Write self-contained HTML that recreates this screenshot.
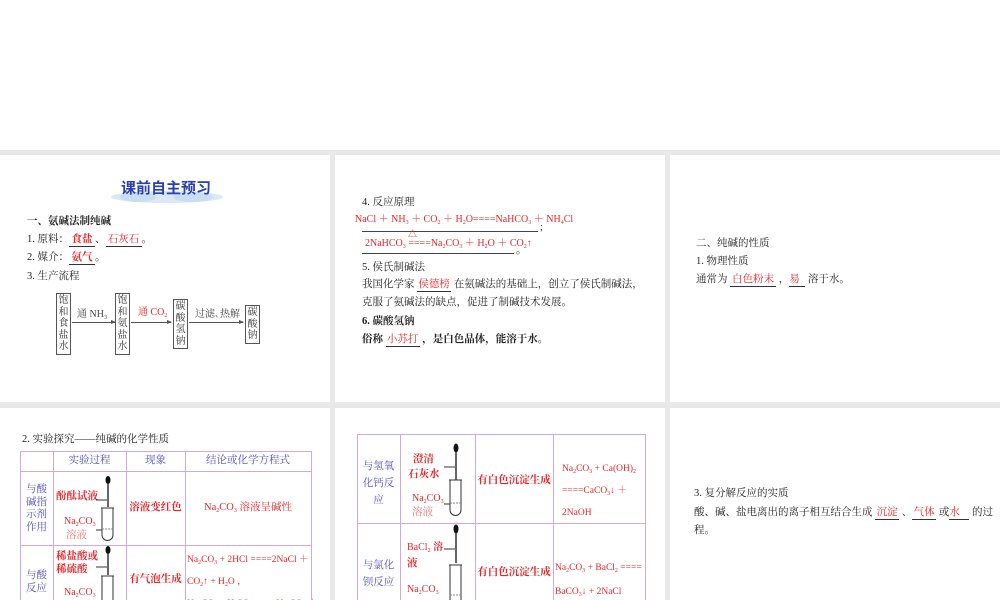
<!DOCTYPE html>
<html><head><meta charset="utf-8"><style>
*{margin:0;padding:0}
html,body{width:1000px;height:600px;overflow:hidden}
body{position:relative;background:#fff;font-family:"Liberation Serif","Noto Serif CJK SC","Noto Sans CJK SC",serif;font-size:10.5px;color:#222}
.g{position:absolute;background:#e8e8e8}
.t{position:absolute;white-space:nowrap;line-height:12px}
.b{font-weight:bold}
.r{color:#e3262a}
.u{border-bottom:1px solid #333;display:inline-block;text-align:center}
sub{font-size:6px;vertical-align:-2px}
.box{position:absolute;border:1px solid #555;width:13px;font-size:10px;line-height:11.5px;text-align:center;color:#333;padding:1px 0}
.ar{position:absolute;height:1px;background:#555}
.ar:after{content:"";position:absolute;right:-1px;top:-2px;border-left:5px solid #555;border-top:2.5px solid transparent;border-bottom:2.5px solid transparent}
.h{position:absolute;height:1px;background:#cfa8e8}
.v{position:absolute;width:1px;background:#cfa8e8}
.bl{color:#5050c0}
.c{position:absolute;text-align:center;line-height:12px}
</style></head><body>
<div class="g" style="left:0;top:150px;width:1000px;height:5px"></div>
<div class="g" style="left:0;top:402px;width:1000px;height:6px"></div>
<div class="g" style="left:330px;top:155px;width:5px;height:445px"></div>
<div class="g" style="left:665px;top:155px;width:5px;height:445px"></div>

<!-- panel 1 -->
<svg style="position:absolute;left:108px;top:180px" width="118" height="26"><ellipse cx="59" cy="17" rx="56" ry="6" fill="#dbe9f6"/><ellipse cx="30" cy="17" rx="18" ry="5" fill="#c9def2"/><ellipse cx="85" cy="17" rx="20" ry="5" fill="#c9def2"/></svg>
<div class="t b" style="left:121px;top:179px;font-size:15px;line-height:18px;color:#2a3fb0;font-family:'Noto Sans CJK SC',sans-serif">课前自主预习</div>
<div class="t b" style="left:27px;top:216px">一、氨碱法制纯碱</div>
<div class="t" style="left:27px;top:234px">1. 原料：<span class="u r b" style="width:26px">食盐</span>、<span class="u r" style="width:36px">石灰石</span>。</div>
<div class="t" style="left:27px;top:252px">2. 媒介：<span class="u r b" style="width:26px">氨气</span>。</div>
<div class="t" style="left:27px;top:271px">3. 生产流程</div>
<div class="box" style="left:56px;top:293px">饱和食盐水</div>
<div class="ar" style="left:72px;top:322px;width:43px"></div>
<div class="t" style="left:77px;top:309px;color:#444;font-size:10px">通 NH<sub>3</sub></div>
<div class="box" style="left:115px;top:293px">饱和氨盐水</div>
<div class="ar" style="left:131px;top:322px;width:40px"></div>
<div class="t r" style="left:138px;top:307px;border-bottom:1px solid #555;font-size:10px">通 CO<sub>2</sub></div>
<div class="box" style="left:173px;top:299px">碳酸氢钠</div>
<div class="ar" style="left:189px;top:322px;width:54px"></div>
<div class="t" style="left:195px;top:309px;color:#444;font-size:10px">过滤､热解</div>
<div class="box" style="left:245px;top:305px">碳酸钠</div>

<!-- panel 2 -->
<div class="t" style="left:362px;top:197px">4. 反应原理</div>
<div class="t r" style="left:355px;top:214px;font-size:10px">NaCl ＋ NH<sub>3</sub> ＋ CO<sub>2</sub> ＋ H<sub>2</sub>O====NaHCO<sub>3</sub> ＋ NH<sub>4</sub>Cl</div>
<div style="position:absolute;left:362px;top:231px;width:176px;height:1px;background:#444"></div>
<div class="t" style="left:540px;top:222px">;</div>
<div class="t r" style="left:408px;top:228px;font-size:9px">△</div>
<div class="t r" style="left:365px;top:238px;font-size:10px">2NaHCO<sub>3</sub> ====Na<sub>2</sub>CO<sub>3</sub> ＋ H<sub>2</sub>O ＋ CO<sub>2</sub>↑</div>
<div style="position:absolute;left:362px;top:253px;width:152px;height:1px;background:#444"></div>
<div class="t" style="left:516px;top:245px">。</div>
<div class="t" style="left:362px;top:262px">5. 侯氏制碱法</div>
<div class="t" style="left:362px;top:279px">我国化学家 <span class="u r" style="width:34px">侯德榜</span> 在氨碱法的基础上，创立了侯氏制碱法，</div>
<div class="t" style="left:362px;top:297px">克服了氨碱法的缺点，促进了制碱技术发展。</div>
<div class="t b" style="left:362px;top:316px">6. 碳酸氢钠</div>
<div class="t b" style="left:362px;top:334px">俗称 <span class="u r" style="width:34px;font-weight:normal">小苏打</span> ，是白色晶体，能溶于水。</div>

<!-- panel 3 -->
<div class="t" style="left:696px;top:238px">二、纯碱的性质</div>
<div class="t" style="left:696px;top:256px">1. 物理性质</div>
<div class="t" style="left:696px;top:274px">通常为 <span class="u r" style="width:46px">白色粉末</span> ，<span class="u r" style="width:16px;text-align:left">易</span> 溶于水。</div>

<!-- row2 panel1 table -->
<div class="t" style="left:22px;top:434px">2. 实验探究——纯碱的化学性质</div>
<div class="h" style="left:20px;top:451px;width:292px"></div>
<div class="h" style="left:20px;top:471px;width:292px"></div>
<div class="h" style="left:20px;top:545px;width:292px"></div>
<div class="v" style="left:20px;top:451px;height:149px"></div>
<div class="v" style="left:53px;top:451px;height:149px"></div>
<div class="v" style="left:126px;top:451px;height:149px"></div>
<div class="v" style="left:185px;top:451px;height:149px"></div>
<div class="v" style="left:311px;top:451px;height:149px"></div>
<div class="c bl" style="left:53px;top:455px;width:73px">实验过程</div>
<div class="c bl" style="left:126px;top:455px;width:59px">现象</div>
<div class="c bl" style="left:185px;top:455px;width:126px">结论或化学方程式</div>
<div class="c bl" style="left:20px;top:484px;width:33px;line-height:12.5px">与酸<br>碱指<br>示剂<br>作用</div>
<div class="t r b" style="left:56px;top:491px">酚酞试液</div>
<div class="t r" style="left:64px;top:516px;font-size:10px">Na<sub>2</sub>CO<sub>3</sub></div>
<div class="t" style="left:66px;top:530px;color:#e77">溶液</div>
<svg style="position:absolute;left:96px;top:475px" width="30" height="70"><ellipse cx="12" cy="5" rx="2.5" ry="4" fill="#111"/><line x1="12" y1="9" x2="12" y2="32" stroke="#333" stroke-width="1.5"/><line x1="0" y1="25" x2="11" y2="25" stroke="#333"/><path d="M6 33 V60 a5 5 0 0 0 11 0 V33" fill="none" stroke="#333"/><line x1="5" y1="33" x2="18" y2="33" stroke="#333"/><line x1="-2" y1="55" x2="6" y2="55" stroke="#333"/><line x1="6" y1="54" x2="17" y2="54" stroke="#888" stroke-dasharray="2 1"/></svg>
<div class="c r b" style="left:126px;top:502px;width:59px">溶液变红色</div>
<div class="c r" style="left:185px;top:502px;width:126px">Na<sub>2</sub>CO<sub>3</sub> 溶液呈碱性</div>
<div class="c bl" style="left:20px;top:569px;width:33px;line-height:13px">与酸<br>反应</div>
<div class="t r b" style="left:56px;top:551px">稀盐酸或</div>
<div class="t r b" style="left:56px;top:564px">稀硫酸</div>
<div class="t r" style="left:64px;top:587px;font-size:10px">Na<sub>2</sub>CO<sub>3</sub></div>
<svg style="position:absolute;left:96px;top:545px" width="30" height="60"><ellipse cx="12" cy="5" rx="2.5" ry="4" fill="#111"/><line x1="12" y1="9" x2="12" y2="30" stroke="#333" stroke-width="1.5"/><line x1="0" y1="22" x2="11" y2="22" stroke="#333"/><path d="M6 31 V60 M17 31 V60" fill="none" stroke="#333"/><line x1="5" y1="31" x2="18" y2="31" stroke="#333"/></svg>
<div class="c r b" style="left:126px;top:574px;width:59px">有气泡生成</div>
<div class="t r" style="left:187px;top:551px;font-size:9.5px;line-height:19px">Na<sub>2</sub>CO<sub>3</sub> + 2HCl ====2NaCl ＋<br>CO<sub>2</sub>↑ + H<sub>2</sub>O ，<br>Na<sub>2</sub>CO<sub>3</sub> + H<sub>2</sub>SO<sub>4</sub> ====Na<sub>2</sub>SO<sub>4</sub> ＋</div>

<!-- row2 panel2 table -->
<div class="h" style="left:357px;top:434px;width:289px"></div>
<div class="h" style="left:357px;top:523px;width:289px"></div>
<div class="v" style="left:357px;top:434px;height:166px"></div>
<div class="v" style="left:400px;top:434px;height:166px"></div>
<div class="v" style="left:475px;top:434px;height:166px"></div>
<div class="v" style="left:553px;top:434px;height:166px"></div>
<div class="v" style="left:645px;top:434px;height:166px"></div>
<div class="c bl" style="left:357px;top:458px;width:43px;line-height:17px">与氢氧<br>化钙反<br>应</div>
<div class="t r b" style="left:413px;top:454px">澄清</div>
<div class="t r b" style="left:408px;top:469px">石灰水</div>
<div class="t r" style="left:412px;top:493px;font-size:10px">Na<sub>2</sub>CO<sub>3</sub></div>
<div class="t" style="left:412px;top:507px;color:#e77">溶液</div>
<svg style="position:absolute;left:444px;top:442px" width="30" height="80"><ellipse cx="12" cy="6" rx="2.5" ry="4.5" fill="#111"/><line x1="12" y1="10" x2="12" y2="38" stroke="#333" stroke-width="1.5"/><line x1="-2" y1="25" x2="11" y2="25" stroke="#333"/><path d="M6 38 V68 a5 5 0 0 0 11 0 V38" fill="none" stroke="#333"/><line x1="5" y1="38" x2="18" y2="38" stroke="#333"/><line x1="-4" y1="62" x2="6" y2="62" stroke="#333"/><line x1="6" y1="61" x2="17" y2="61" stroke="#888" stroke-dasharray="2 1"/></svg>
<div class="c r b" style="left:475px;top:475px;width:78px">有白色沉淀生成</div>
<div class="t r" style="left:562px;top:460px;font-size:9.5px;line-height:19px">Na<sub>2</sub>CO<sub>3</sub> + Ca(OH)<sub>2</sub><br>====CaCO<sub>3</sub>↓ ＋<br>2NaOH</div>
<div class="c bl" style="left:357px;top:557px;width:43px;line-height:17px">与氯化<br>钡反应</div>
<div class="t r" style="left:407px;top:542px;font-size:10px">BaCl<sub>2</sub> <b>溶</b></div>
<div class="t r b" style="left:407px;top:558px">液</div>
<div class="t r" style="left:407px;top:584px;font-size:10px">Na<sub>2</sub>CO<sub>3</sub></div>
<svg style="position:absolute;left:444px;top:523px" width="30" height="80"><ellipse cx="12" cy="6" rx="2.5" ry="4.5" fill="#111"/><line x1="12" y1="10" x2="12" y2="40" stroke="#333" stroke-width="1.5"/><line x1="-4" y1="26" x2="11" y2="26" stroke="#333"/><path d="M6 42 V80 M17 42 V80" fill="none" stroke="#333"/><line x1="5" y1="42" x2="18" y2="42" stroke="#333"/><line x1="6" y1="72" x2="17" y2="72" stroke="#888" stroke-dasharray="2 1"/></svg>
<div class="c r b" style="left:475px;top:567px;width:78px">有白色沉淀生成</div>
<div class="t r" style="left:555px;top:558px;font-size:9.5px;line-height:21px">Na<sub>2</sub>CO<sub>3</sub> + BaCl<sub>2</sub> ====<br>BaCO<sub>3</sub>↓ + 2NaCl</div>

<!-- row2 panel3 -->
<div class="t" style="left:694px;top:488px">3. 复分解反应的实质</div>
<div class="t" style="left:694px;top:507px">酸、碱、盐电离出的离子相互结合生成 <span class="u r" style="width:24px">沉淀</span> 、<span class="u r" style="width:24px">气体</span> 或<span class="u r" style="width:20px;text-align:left">水</span> 的过</div>
<div class="t" style="left:694px;top:525px">程。</div>
</body></html>
